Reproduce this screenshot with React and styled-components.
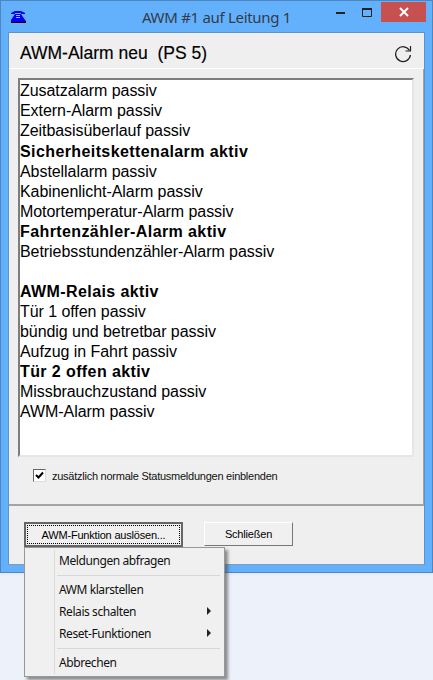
import React from 'react';
import styled, { createGlobalStyle } from 'styled-components';

const GlobalStyle = createGlobalStyle`
  html, body {
    margin: 0;
    padding: 0;
    background: #edf1f9;
  }
`;

const Page = styled.div`
  position: relative;
  width: 433px;
  height: 680px;
  overflow: hidden;
  font-family: "Liberation Sans", Arial, sans-serif;
  color: #000;
`;

const Frame = styled.div`
  box-sizing: border-box;
  width: 433px;
  height: 573px;
  background: #63b0fd;
  border: 1px solid #4f86bd;
  box-shadow: 0 1px 3px rgba(0, 0, 0, 0.06);
  padding: 0 7px 7px;
  display: flex;
  flex-direction: column;
`;

const TitleBar = styled.div`
  position: relative;
  height: 31px;
  display: flex;
  align-items: center;
  justify-content: center;
  font-family: "Noto Sans", sans-serif;
  font-size: 15px;
  letter-spacing: -0.3px;
  color: #333c47;
`;

const AppIcon = styled.svg`
  position: absolute;
  left: 2px;
  top: 9px;
`;

const WinButtons = styled.div`
  position: absolute;
  right: -1px;
  top: 1px;
  display: flex;
  align-items: flex-start;
`;

const WinButton = styled.div`
  width: ${p => p.$w}px;
  height: 20px;
  background: ${p => p.$bg || 'transparent'};
  display: flex;
  align-items: center;
  justify-content: center;
`;

const Client = styled.div`
  flex: 1;
  background: #efefef;
  border: 1px solid #5e93c9;
  border-bottom-color: #7f9dbb;
  display: flex;
  flex-direction: column;
`;

const Header = styled.div`
  height: 36px;
  box-sizing: border-box;
  display: flex;
  align-items: center;
  justify-content: space-between;
  padding: 6px 12px 0 11px;
  border-bottom: 1px solid #fff;
  font-size: 17.5px;
  -webkit-text-stroke: 0.15px #000;
  white-space: pre;
`;

const MainPanel = styled.div`
  height: 437px;
  box-sizing: border-box;
  padding: 9px 9px 0;
  border-bottom: 2px solid #a4a4a4;
  border-right: 1px solid #a4a4a4;
`;

const ListBox = styled.div`
  box-sizing: border-box;
  height: 379px;
  background: #fff;
  border: 2px solid;
  border-color: #7d7d7d #e6e6e6 #e6e6e6 #7d7d7d;
  padding: 1.4px 0 0;
  font-size: 16px;
  line-height: 20.05px;
`;

const ListRow = styled.div`
  height: 20.05px;
  white-space: nowrap;
  font-weight: ${p => (p.$strong ? 700 : 400)};
  letter-spacing: ${p => (p.$strong ? '0.4px' : '-0.06px')};
`;

const CheckRow = styled.label`
  display: flex;
  align-items: center;
  gap: 6px;
  margin: 12px 0 0 15px;
  font-size: 11px;
  letter-spacing: -0.25px;
  color: #111;
`;

const CheckBox = styled.span`
  box-sizing: border-box;
  width: 13px;
  height: 13px;
  background: #fff;
  border: 1px solid;
  border-color: #666 #ddd #ddd #666;
  display: flex;
  align-items: center;
  justify-content: center;
`;

const ButtonBar = styled.div`
  display: flex;
  align-items: flex-start;
  gap: 21px;
  padding: 16px 0 0 15px;
`;

const PushButton = styled.div`
  box-sizing: border-box;
  width: ${p => p.$w}px;
  height: ${p => (p.$focused ? 25 : 24)}px;
  background: #f0f0f0;
  font-size: 11px;
  letter-spacing: -0.2px;
  display: flex;
  align-items: center;
  justify-content: center;
  border: ${p => (p.$focused ? '2px' : '1px')} solid;
  border-color: ${p => (p.$focused ? '#666' : '#fff #777 #777 #fff')};
`;

const FocusRing = styled.span`
  flex: 1;
  align-self: stretch;
  margin: 1px;
  border: 1px dotted #000;
  display: flex;
  align-items: center;
  justify-content: center;
`;

const Menu = styled.div`
  position: absolute;
  left: 24px;
  top: 547px;
  box-sizing: border-box;
  width: 201px;
  height: 130px;
  background: #f0f0f0;
  border: 1px solid #979797;
  box-shadow: 3px 3px 3px rgba(70, 70, 70, 0.6);
  padding: 1px 2px;
  font-family: "Noto Sans", sans-serif;
  font-size: 12px;
  letter-spacing: -0.42px;
  color: #111;
`;

const Gutter = styled.div`
  position: absolute;
  left: 29px;
  top: 2px;
  bottom: 2px;
  width: 1px;
  background: #dcdcdc;
`;

const MenuItem = styled.div`
  height: 22px;
  display: flex;
  align-items: center;
  justify-content: space-between;
  padding: 0 11px 0 32px;
`;

const MenuSep = styled.div`
  height: 1px;
  margin: 4px 2px 2px 30px;
  background: #d7d7d7;
`;

const Arrow = styled.span`
  width: 0;
  height: 0;
  border-left: 4px solid #222;
  border-top: 4px solid transparent;
  border-bottom: 4px solid transparent;
`;

const rows = [
  ['Zusatzalarm passiv'],
  ['Extern-Alarm passiv'],
  ['Zeitbasisüberlauf passiv'],
  ['Sicherheitskettenalarm aktiv', true],
  ['Abstellalarm passiv'],
  ['Kabinenlicht-Alarm passiv'],
  ['Motortemperatur-Alarm passiv'],
  ['Fahrtenzähler-Alarm aktiv', true],
  ['Betriebsstundenzähler-Alarm passiv'],
  [''],
  ['AWM-Relais aktiv', true],
  ['Tür 1 offen passiv'],
  ['bündig und betretbar passiv'],
  ['Aufzug in Fahrt passiv'],
  ['Tür 2 offen aktiv', true],
  ['Missbrauchzustand passiv'],
  ['AWM-Alarm passiv'],
];

export default function App() {
  return (
    <Page>
      <GlobalStyle />
      <Frame>
        <TitleBar>
          <AppIcon width="16" height="13" viewBox="0 0 16 13">
            <path d="M1 13h15v-2l-1-1H2L1 11z" fill="#000" />
            <path d="M5 4h6l4 6 0 2H1l0-2z" fill="#0000f0" />
            <path d="M1 3l4-2h6l4 2v1h-4V3H5v1H1z" fill="#0000f0" />
            <path d="M6 5h4v1H6zM6 7h4v1H6z" fill="#8fb8ff" />
          </AppIcon>
          AWM #1 auf Leitung 1
          <WinButtons>
            <WinButton $w={27}>
              <svg width="9" height="3" viewBox="0 0 9 3"><rect width="9" height="2" y="1" fill="#222" /></svg>
            </WinButton>
            <WinButton $w={27}>
              <svg width="11" height="9" viewBox="0 0 11 9">
                <path d="M.5 1.5h9v7h-9z" fill="none" stroke="#222" />
                <rect width="10" height="2" fill="#222" />
              </svg>
            </WinButton>
            <WinButton $w={45} $bg="#c75050">
              <svg width="10" height="10" viewBox="0 0 10 10">
                <path d="M1 1l8 8M9 1l-8 8" stroke="#fff" strokeWidth="2" />
              </svg>
            </WinButton>
          </WinButtons>
        </TitleBar>
        <Client>
          <Header>
            <span>AWM-Alarm neu  (PS 5)</span>
            <svg width="18" height="18" viewBox="0 0 18 18" fill="none" stroke="#222" strokeWidth="1.3">
              <path d="M15.5 5.5A7.4 7.4 0 1 0 16.4 10" />
              <path d="M16.5 1v5h-5" strokeWidth="1.2" />
            </svg>
          </Header>
          <MainPanel>
            <ListBox>
              {rows.map(([text, strong], i) => (
                <ListRow key={i} $strong={strong}>{text}</ListRow>
              ))}
            </ListBox>
            <CheckRow>
              <CheckBox>
                <svg width="9" height="9" viewBox="0 0 9 9">
                  <path d="M1 4l2.5 2.5L8 1.5" fill="none" stroke="#000" strokeWidth="2" />
                </svg>
              </CheckBox>
              zusätzlich normale Statusmeldungen einblenden
            </CheckRow>
          </MainPanel>
          <ButtonBar>
            <PushButton $w={159} $focused><FocusRing>AWM-Funktion auslösen...</FocusRing></PushButton>
            <PushButton $w={89}>Schließen</PushButton>
          </ButtonBar>
        </Client>
      </Frame>
      <Menu>
        <Gutter />
        <MenuItem>Meldungen abfragen</MenuItem>
        <MenuSep />
        <MenuItem>AWM klarstellen</MenuItem>
        <MenuItem>Relais schalten<Arrow /></MenuItem>
        <MenuItem>Reset-Funktionen<Arrow /></MenuItem>
        <MenuSep />
        <MenuItem>Abbrechen</MenuItem>
      </Menu>
    </Page>
  );
}
